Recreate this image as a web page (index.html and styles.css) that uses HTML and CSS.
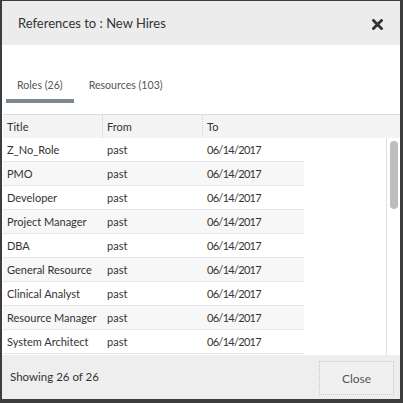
FILE: index.html
```html
<!DOCTYPE html>
<html>
<head>
<meta charset="utf-8">
<link rel="stylesheet" href="styles.css">
</head>
<body>
<div class="modal">
  <div class="header">
    <span class="title">References to : New Hires</span>
    <svg class="close-x" width="11" height="11" viewBox="0 0 11 11"><path d="M1.5 1.5 L9.5 9.5 M9.5 1.5 L1.5 9.5" stroke="#333" stroke-width="2.8" stroke-linecap="square"/></svg>
  </div>
  <div class="body">
    <div class="tabs">
      <div class="tab active">Roles (26)</div>
      <div class="tab">Resources (103)</div>
    </div>
    <div class="grid">
      <div class="thead">
        <div class="th">Title</div>
        <div class="th">From</div>
        <div class="th last">To</div>
      </div>
      <div class="scroll">
        <div class="rows">
          <div class="tr"><div class="td">Z_No_Role</div><div class="td">past</div><div class="td date">06/14/2017</div></div>
          <div class="tr alt"><div class="td">PMO</div><div class="td">past</div><div class="td date">06/14/2017</div></div>
          <div class="tr"><div class="td">Developer</div><div class="td">past</div><div class="td date">06/14/2017</div></div>
          <div class="tr alt"><div class="td">Project Manager</div><div class="td">past</div><div class="td date">06/14/2017</div></div>
          <div class="tr"><div class="td">DBA</div><div class="td">past</div><div class="td date">06/14/2017</div></div>
          <div class="tr alt"><div class="td">General Resource</div><div class="td">past</div><div class="td date">06/14/2017</div></div>
          <div class="tr"><div class="td">Clinical Analyst</div><div class="td">past</div><div class="td date">06/14/2017</div></div>
          <div class="tr alt"><div class="td">Resource Manager</div><div class="td">past</div><div class="td date">06/14/2017</div></div>
          <div class="tr"><div class="td">System Architect</div><div class="td">past</div><div class="td date">06/14/2017</div></div>
        </div>
        <div class="track"><div class="thumb"></div></div>
      </div>
    </div>
  </div>
  <div class="footer">
    <span class="count">Showing 26 of 26</span>
    <div class="btn">Close</div>
  </div>
</div>
</body>
</html>
```

FILE: styles.css
```css
html, body {
  margin: 0;
  padding: 0;
  background: #3d3d3d;
  width: 403px;
  height: 403px;
  overflow: hidden;
}
body {
  font-family: Lato, "Open Sans", sans-serif;
  color: #333;
}
.modal {
  width: 398px;
  height: 398px;
  margin: 1px 0 0 2px;
  display: flex;
  flex-direction: column;
  background: #fff;
}
.header {
  height: 44px;
  flex: none;
  background: #ececec;
  display: flex;
  align-items: center;
  justify-content: space-between;
  padding: 0 17px 0 16px;
}
.title {
  font-size: 13px;
  color: #333;
  margin-top: -1px;
}
.close-x {
  display: block;
  margin-top: 2px;
}
.body {
  flex: 1;
  display: flex;
  flex-direction: column;
  min-height: 0;
  background: #fff;
}
.tabs {
  display: flex;
  padding: 27px 0 0 4px;
  flex: none;
  gap: 4px;
}
.tab {
  font-size: 10.6px;
  color: #555;
  padding: 0 11px;
  line-height: 27px;
  border-bottom: 4px solid transparent;
}
.tab.active {
  border-bottom-color: #7c8791;
}
.grid {
  flex: 1;
  display: flex;
  flex-direction: column;
  min-height: 0;
  margin-top: 11px;
  margin-left: 1px;
}
.thead {
  display: flex;
  height: 23px;
  flex: none;
  background: #f4f4f4;
  border-top: 1px solid #dcdcdc;
}
.th {
  width: 100px;
  box-sizing: border-box;
  padding-left: 4px;
  font-size: 11px;
  line-height: 23px;
  color: #333;
  border-right: 1px dotted #d4d4d4;
}
.th.last {
  border-right: none;
}
.scroll {
  flex: 1;
  display: flex;
  min-height: 0;
}
.rows {
  width: 383px;
  overflow: hidden;
}
.tr {
  display: flex;
  width: 301px;
  height: 23px;
  border-bottom: 1px solid #e6e6e6;
  background: #fff;
}
.tr.alt {
  background: #f7f7f7;
}
.td {
  width: 100px;
  box-sizing: border-box;
  padding-left: 4px;
  font-size: 11px;
  line-height: 24px;
  color: #333;
  white-space: nowrap;
}
.td.date {
  letter-spacing: -0.7px;
}
.track {
  width: 14px;
  border-left: 1px solid #e0e0e0;
  padding: 3px 0 0 3px;
  box-sizing: border-box;
}
.thumb {
  width: 8px;
  height: 68px;
  border-radius: 4px;
  background: #bdbdbd;
}
.footer {
  height: 44px;
  flex: none;
  background: #eeeeee;
  display: flex;
  align-items: center;
  justify-content: space-between;
  padding: 0 6px 0 8px;
}
.count {
  font-size: 11.5px;
  color: #333;
  margin-top: -1px;
}
.btn {
  width: 75px;
  height: 34px;
  box-sizing: border-box;
  border: 1px dotted #c8c8c8;
  display: flex;
  align-items: center;
  justify-content: center;
  font-size: 12px;
  color: #555;
  background: #f0f0f0;
  margin-top: 2px;
}
```
